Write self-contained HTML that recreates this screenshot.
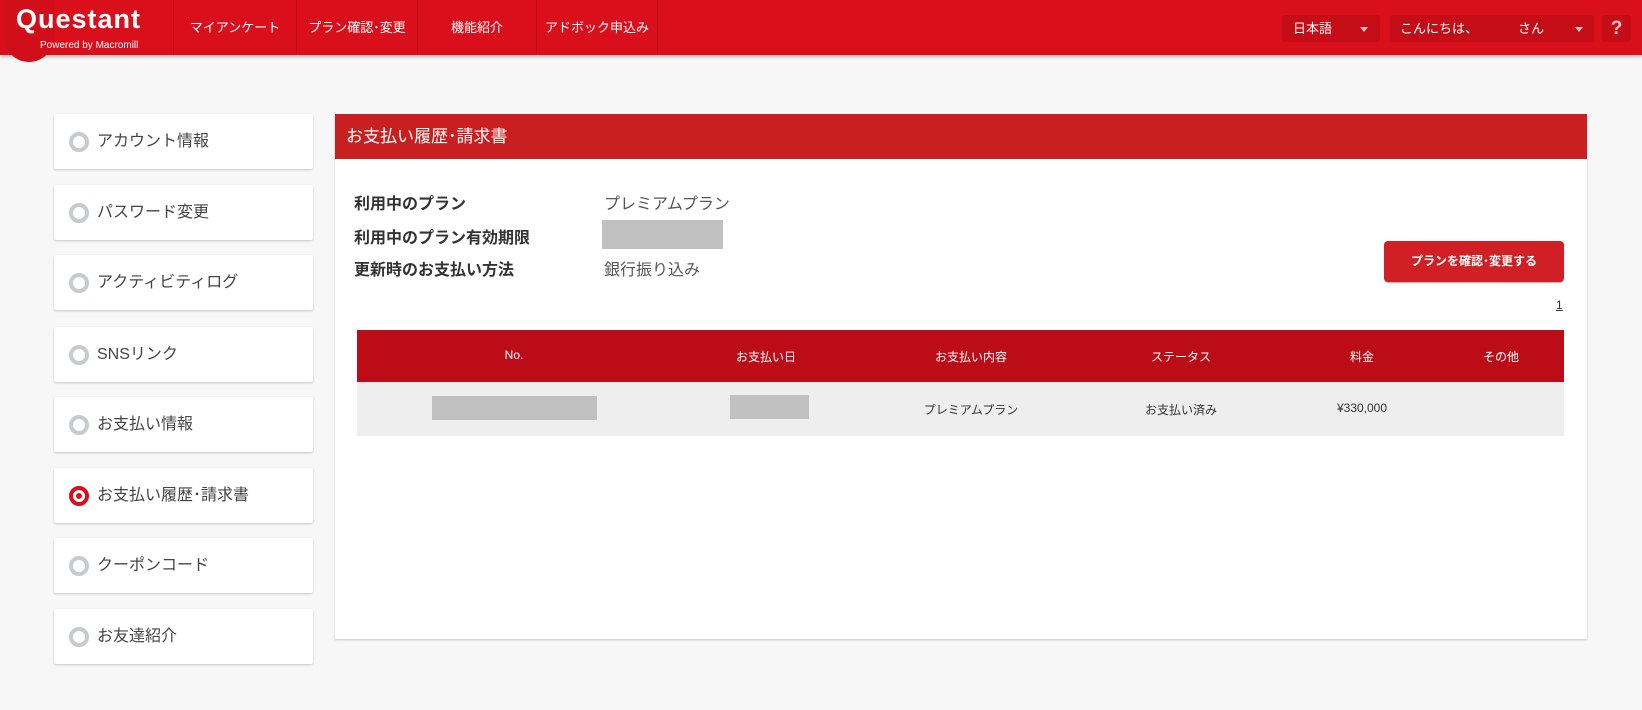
<!DOCTYPE html>
<html><head><meta charset="utf-8"><style>
*{margin:0;padding:0;box-sizing:border-box}
body{width:1642px;height:710px;background:#f7f7f7;font-family:"Liberation Sans","Noto Sans CJK JP",sans-serif;position:relative;overflow:hidden;color:#333}
.hdr{position:absolute;left:0;top:0;width:1642px;height:55px;background:#d90f1c;box-shadow:0 2px 3px rgba(0,0,0,.25)}
.logoc{position:absolute;left:4px;top:-10px;width:50px;height:72px;border-radius:0 0 30px 30px;background:#d10f1b}
.logo{position:absolute;left:16px;top:4px;color:#fff;font-size:27px;font-weight:bold;letter-spacing:1px}
.pb{position:absolute;left:40px;top:40px;color:#fff;font-size:10px}
.nav{position:absolute;top:0;height:55px;line-height:55px;color:#fff;font-size:13px;text-align:center;border-left:1px solid rgba(0,0,0,.1)}
.dd{position:absolute;top:15px;height:27px;background:#c50d18;border-radius:3px;color:#fff;font-size:13px;line-height:27px}
.tri{position:absolute;top:12px;width:0;height:0;border-left:4px solid transparent;border-right:4px solid transparent;border-top:5px solid #f2c4c7}
.card{position:absolute;left:54px;width:259px;height:55px;background:#fff;box-shadow:0 1px 2px rgba(0,0,0,.2);border-radius:2px;font-size:16px;color:#444;line-height:55px;padding-left:43px}
.rad{position:absolute;left:15px;top:18px;width:20px;height:20px;border-radius:50%;border:4px solid #c5cbd1}
.rad.on{border-color:#d90f1c}
.rad.on::after{content:"";position:absolute;left:3px;top:3px;width:6px;height:6px;border-radius:50%;background:#d90f1c}
.panel{position:absolute;left:335px;top:114px;width:1252px;height:525px;background:#fff;box-shadow:0 1px 2px rgba(0,0,0,.2)}
.ph{height:45px;background:#c82020;color:#fff;font-size:17px;line-height:45px;padding-left:11px}
.lbl{position:absolute;left:19px;font-size:16px;font-weight:bold;color:#333}
.val{position:absolute;left:269px;font-size:16px;color:#555}
.btn{position:absolute;left:1049px;top:127px;width:180px;height:41px;background:#d02025;border-radius:4px;color:#fff;font-size:12px;font-weight:bold;text-align:center;line-height:41px;box-shadow:0 1px 1px rgba(0,0,0,.3)}
.th{position:absolute;left:22px;top:216px;width:1207px;height:52px;background:#bc0c18}
.tr{position:absolute;left:22px;top:268px;width:1207px;height:54px;background:#eeeeee}
.c{position:absolute;transform:translateX(-50%);font-size:12px;white-space:nowrap}
.th .c{color:#fff;top:18px}
.tr .c{color:#333;top:19px}
.g{position:absolute;background:#c0c0c0}
</style></head><body>
<div class="hdr">
<div class="logoc"></div>
<div class="logo">Questant</div>
<div class="pb">Powered by Macromill</div>
<div class="nav" style="left:173px;width:123px">マイアンケート</div>
<div class="nav" style="left:296px;width:121px">プラン確認･変更</div>
<div class="nav" style="left:417px;width:119px">機能紹介</div>
<div class="nav" style="left:536px;width:121px">アドボック申込み</div>
<div class="nav" style="left:657px;width:1px"></div>
<div class="dd" style="left:1282px;width:98px"><span style="margin-left:11px">日本語</span><div class="tri" style="left:78px"></div></div>
<div class="dd" style="left:1390px;width:204px"><span style="margin-left:10px">こんにちは、</span><span style="position:absolute;left:128px">さん</span><div class="tri" style="left:185px"></div></div>
<div class="dd" style="left:1602px;width:29px;text-align:center;font-weight:bold;font-size:19px;color:#f2c4c7">?</div>
</div>

<div class="card" style="top:114px"><div class="rad"></div>アカウント情報</div>
<div class="card" style="top:185px"><div class="rad"></div>パスワード変更</div>
<div class="card" style="top:255px"><div class="rad"></div>アクティビティログ</div>
<div class="card" style="top:327px"><div class="rad"></div>SNSリンク</div>
<div class="card" style="top:397px"><div class="rad"></div>お支払い情報</div>
<div class="card" style="top:468px"><div class="rad on"></div>お支払い履歴･請求書</div>
<div class="card" style="top:538px"><div class="rad"></div>クーポンコード</div>
<div class="card" style="top:609px"><div class="rad"></div>お友達紹介</div>

<div class="panel">
<div class="ph">お支払い履歴･請求書</div>
<div class="lbl" style="top:76px">利用中のプラン</div>
<div class="lbl" style="top:110px">利用中のプラン有効期限</div>
<div class="lbl" style="top:142px">更新時のお支払い方法</div>
<div class="val" style="top:76px">プレミアムプラン</div>
<div class="g" style="left:267px;top:106px;width:121px;height:29px"></div>
<div class="val" style="top:142px">銀行振り込み</div>
<div class="btn">プランを確認･変更する</div>
<div style="position:absolute;left:1221px;top:184px;font-size:12px;text-decoration:underline">1</div>
<div class="th">
<div class="c" style="left:157px">No.</div>
<div class="c" style="left:409px">お支払い日</div>
<div class="c" style="left:614px">お支払い内容</div>
<div class="c" style="left:824px">ステータス</div>
<div class="c" style="left:1005px">料金</div>
<div class="c" style="left:1144px">その他</div>
</div>
<div class="tr">
<div class="g" style="left:75px;top:14px;width:165px;height:24px"></div>
<div class="g" style="left:373px;top:13px;width:79px;height:24px"></div>
<div class="c" style="left:614px">プレミアムプラン</div>
<div class="c" style="left:824px">お支払い済み</div>
<div class="c" style="left:1005px">¥330,000</div>
</div>
</div>
</body></html>
